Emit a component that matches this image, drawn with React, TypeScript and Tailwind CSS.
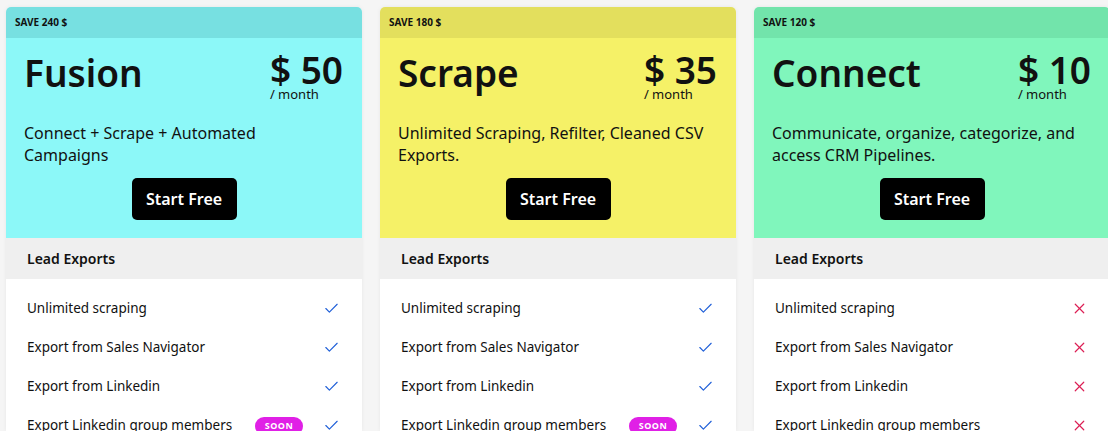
import { Check, X } from "lucide-react";

type Plan = {
  save: string;
  name: string;
  price: string;
  desc: string;
  top: string;
  body: string;
  included: boolean;
};

const plans: Plan[] = [
  {
    save: "SAVE 240 $",
    name: "Fusion",
    price: "$ 50",
    desc: "Connect + Scrape + Automated Campaigns",
    top: "bg-[#77e0e1]",
    body: "bg-[#8cf8f8]",
    included: true,
  },
  {
    save: "SAVE 180 $",
    name: "Scrape",
    price: "$ 35",
    desc: "Unlimited Scraping, Refilter, Cleaned CSV Exports.",
    top: "bg-[#e3df5d]",
    body: "bg-[#f5f167]",
    included: true,
  },
  {
    save: "SAVE 120 $",
    name: "Connect",
    price: "$ 10",
    desc: "Communicate, organize, categorize, and access CRM Pipelines.",
    top: "bg-[#72e4ab]",
    body: "bg-[#80f6bc]",
    included: false,
  },
];

const features = [
  { label: "Unlimited scraping", soon: false },
  { label: "Export from Sales Navigator", soon: false },
  { label: "Export from Linkedin", soon: false },
  { label: "Export Linkedin group members", soon: true },
];

function PlanCard({ plan }: { plan: Plan }) {
  return (
    <div className="w-[356px] shrink-0 rounded-t-[5px] overflow-hidden bg-white shadow-[0_0_4px_rgba(0,0,0,0.06)]">
      <div className={`${plan.top} h-[31px] flex items-center pl-[9px] text-[10px] font-bold text-[#111]`}>
        {plan.save}
      </div>
      <div className={`${plan.body} h-[200px] px-[18px] pt-[12px] flex flex-col`}>
        <div className="flex justify-between items-start">
          <h2 className="text-[37px] leading-[44px] font-semibold pt-[1px]">{plan.name}</h2>
          <div className="flex flex-col items-start pr-[1px] pt-[2px]">
            <span className="text-[37px] leading-[35px] font-semibold">{plan.price}</span>
            <span className="text-[13px] leading-[15px]">/ month</span>
          </div>
        </div>
        <p className="mt-[20px] text-[16px] leading-[22px] max-w-[316px]">{plan.desc}</p>
        <div className="flex justify-center mt-auto mb-[18px]">
          <button className="bg-black text-white rounded-[5px] w-[105px] h-[42px] text-[16px] font-semibold">
            Start Free
          </button>
        </div>
      </div>
      <div className="bg-[#efefef] h-[41px] flex items-center px-[21px] text-[14px] font-semibold">
        Lead Exports
      </div>
      <div className="pt-[10px]">
        {features.map((f) => (
          <div key={f.label} className="h-[39px] flex items-center pl-[21px] pr-[22px] text-[13.5px]">
            <span className="flex-1">{f.label}</span>
            {f.soon && plan.included && (
              <span className="mr-[20px] w-[48px] h-[18px] rounded-full bg-[#e020e6] text-white text-[9px] font-bold flex items-center justify-center tracking-[0.5px]">
                SOON
              </span>
            )}
            {plan.included ? (
              <Check size={17} strokeWidth={1.6} className="text-[#1f5fd8]" />
            ) : (
              <X size={17} strokeWidth={1.7} className="text-[#dc1f55]" />
            )}
          </div>
        ))}
      </div>
    </div>
  );
}

export default function App() {
  return (
    <div
      className="w-[1108px] h-[431px] overflow-hidden bg-[#f5f5f5] text-[#111] flex gap-[18px] pl-[6px] pt-[7px]"
      style={{ fontFamily: '"Noto Sans", sans-serif' }}
    >
      {plans.map((p) => (
        <PlanCard key={p.name} plan={p} />
      ))}
    </div>
  );
}
